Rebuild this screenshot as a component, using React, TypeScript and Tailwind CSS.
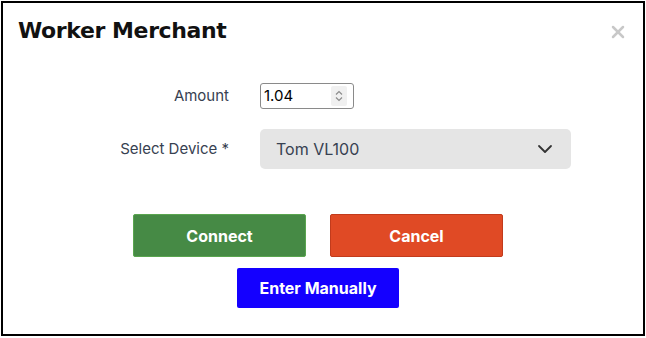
import { ChevronDown, X } from 'lucide-react';

export default function App() {
  return (
    <div className="w-[646px] h-[338px] bg-white p-px" style={{ fontFamily: 'Inter, "Liberation Sans", sans-serif' }}>
      <div className="relative h-[335px] w-[644px] border-2 border-black bg-white">
        <div className="flex items-start justify-between pl-[15px] pr-[15px] pt-[14px]">
          <h1 className="text-[22px] font-bold leading-[28px] tracking-[-0.4px] text-[#111]" style={{ fontFamily: '"DejaVu Sans", Inter, sans-serif' }}>
            Worker Merchant
          </h1>
          <X size={20} strokeWidth={3} className="mt-[5px] text-[#c8c8c8]" />
        </div>

        <div className="mt-[38px] grid grid-cols-[226px_1fr] items-center gap-x-[31px] gap-y-[20px] pr-[72px]">
          <span className="text-right text-[15px] text-[#374151]">Amount</span>
          <div className="flex h-[26px] w-[94px] items-center justify-between rounded-[3px] border border-[#8a8a8a] pl-[3px] pr-[6px]">
            <span className="text-[15px] text-black">1.04</span>
            <span className="flex h-[20px] w-[16px] flex-col items-center justify-center rounded-[2px] bg-[#f0f0f0]">
              <svg width="8" height="12" viewBox="0 0 8 12" fill="none" stroke="#8c8c8c" strokeWidth="1.2">
                <path d="M1 4.5 L4 1.5 L7 4.5" />
                <path d="M1 7.5 L4 10.5 L7 7.5" />
              </svg>
            </span>
          </div>

          <span className="text-right text-[15px] text-[#374151]">Select Device *</span>
          <div className="flex h-[40px] items-center justify-between rounded-[5px] bg-[#e5e5e5] pl-[16px] pr-[14px]">
            <span className="text-[16px] text-[#374151]">Tom VL100</span>
            <ChevronDown size={24} strokeWidth={1.8} className="text-[#333]" />
          </div>
        </div>

        <div className="mt-[45px] flex flex-col items-center pr-[10px]">
          <div className="flex gap-[24px]">
            <button className="h-[43px] w-[173px] rounded-[2px] border border-[#5aa54f] bg-[#468a45] text-[16px] font-bold text-white">
              Connect
            </button>
            <button className="h-[43px] w-[173px] rounded-[2px] border border-[#c23b1c] bg-[#e04a25] text-[16px] font-bold text-white">
              Cancel
            </button>
          </div>
          <button className="mt-[11px] h-[40px] w-[162px] rounded-[2px] bg-[#1400ff] text-[16px] font-bold text-white">
            Enter Manually
          </button>
        </div>
      </div>
    </div>
  );
}
